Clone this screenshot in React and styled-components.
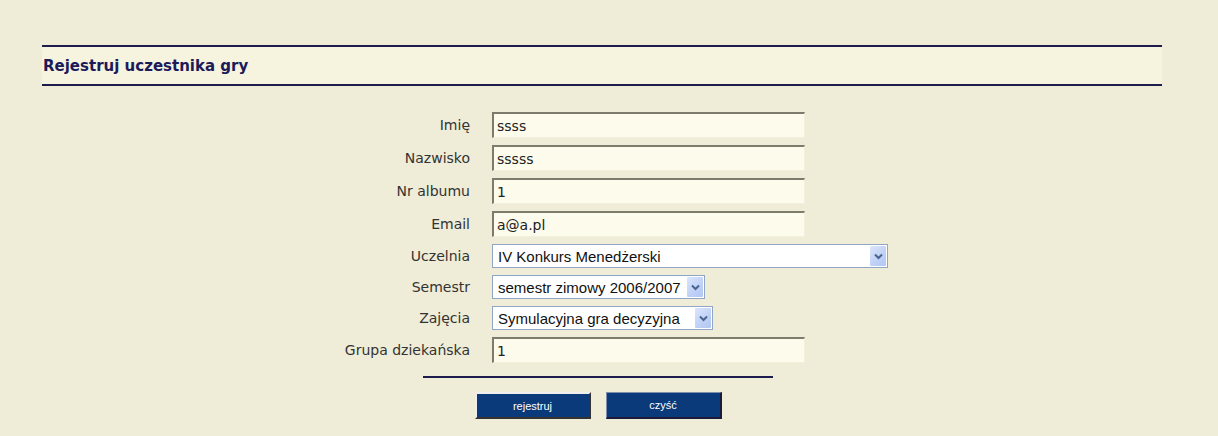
import React from "react";
import styled, { createGlobalStyle } from "styled-components";

const GlobalStyle = createGlobalStyle`
  html, body {
    margin: 0;
    padding: 0;
    background: #efecd8;
  }
  body {
    font-family: "DejaVu Sans", Verdana, sans-serif;
  }
`;

const Page = styled.div`
  width: 1218px;
  height: 436px;
  box-sizing: border-box;
  padding: 45px 0 0 42px;
  background: #efecd8;
`;

const TitleBar = styled.div`
  width: 1120px;
  height: 41px;
  box-sizing: border-box;
  border-top: 2px solid #1e1b4f;
  border-bottom: 2px solid #1e1b4f;
  background: #f6f4de;
  display: flex;
  align-items: center;
`;

const Title = styled.h2`
  margin: 0 0 0 1px;
  font-size: 15px;
  font-weight: bold;
  color: #1c1a5a;
`;

const Form = styled.form`
  margin-top: 26px;
  display: grid;
  grid-template-columns: 428px auto;
  column-gap: 22px;
  row-gap: 7px;
  align-items: center;
`;

const Label = styled.label`
  justify-self: end;
  font-size: 14px;
  color: #333333;
`;

const TextInput = styled.input`
  width: 313px;
  height: 26px;
  box-sizing: border-box;
  margin: 0;
  padding: 0 3px;
  border-style: solid;
  border-width: 2px 1px 1px 2px;
  border-color: #7d7b6c #f3f1de #f3f1de #7d7b6c;
  background: #fcfbec;
  font-family: "DejaVu Sans", Verdana, sans-serif;
  font-size: 14px;
  color: #222;
  outline: none;
`;

const SelectBox = styled.div`
  width: ${({ $width }) => $width}px;
  height: 24px;
  box-sizing: border-box;
  border: 1px solid #8fa7c4;
  background: #ffffff;
  display: flex;
  align-items: stretch;
`;

const Select = styled.select`
  flex: 1;
  min-width: 0;
  appearance: none;
  border: none;
  background: transparent;
  padding: 0 0 0 5px;
  margin: 0;
  font-family: "Liberation Sans", Arial, sans-serif;
  font-size: 15px;
  color: #111;
  outline: none;
`;

const ArrowButton = styled.span`
  width: 16px;
  margin: 1px;
  background: linear-gradient(135deg, #dce6fb 0%, #bfd0f6 60%, #b3c7f3 100%);
  border-radius: 1px;
  display: flex;
  align-items: center;
  justify-content: center;
`;

const Footer = styled.div`
  width: 350px;
  margin: 13px 0 0 381px;
  display: flex;
  flex-direction: column;
  align-items: center;
`;

const Divider = styled.div`
  width: 100%;
  height: 2px;
  background: #1e1b4f;
`;

const Buttons = styled.div`
  margin-top: 14px;
  display: flex;
  gap: 15px;
`;

const Button = styled.button`
  width: 116px;
  height: 27px;
  box-sizing: border-box;
  margin: 0;
  padding: 0;
  background: #0b3a7a;
  color: #ffffff;
  font-family: "Liberation Sans", Arial, sans-serif;
  font-size: 11px;
  border-style: solid;
  border-width: ${({ $active }) => ($active ? "2px" : "1px 2px 2px 1px")};
  border-color: ${({ $active }) =>
    $active ? "#eeeeee #333333 #333333 #eeeeee" : "#7f8fae #1a1a3a #1a1a3a #7f8fae"};
  cursor: pointer;
`;

const Chevron = () => (
  <svg width="9" height="7" viewBox="0 0 9 7">
    <path d="M1 1.5 L4.5 5 L8 1.5" fill="none" stroke="#4a6490" strokeWidth="2" />
  </svg>
);

const Dropdown = ({ width, value }) => (
  <SelectBox $width={width}>
    <Select defaultValue={value}>
      <option>{value}</option>
    </Select>
    <ArrowButton>
      <Chevron />
    </ArrowButton>
  </SelectBox>
);

export default function App() {
  return (
    <>
      <GlobalStyle />
      <Page>
        <TitleBar>
          <Title>Rejestruj uczestnika gry</Title>
        </TitleBar>
        <Form onSubmit={(e) => e.preventDefault()}>
          <Label>Imię</Label>
          <TextInput defaultValue="ssss" />
          <Label>Nazwisko</Label>
          <TextInput defaultValue="sssss" />
          <Label>Nr albumu</Label>
          <TextInput defaultValue="1" />
          <Label>Email</Label>
          <TextInput defaultValue="a@a.pl" />
          <Label>Uczelnia</Label>
          <Dropdown width={396} value="IV Konkurs Menedżerski" />
          <Label>Semestr</Label>
          <Dropdown width={213} value="semestr zimowy 2006/2007" />
          <Label>Zajęcia</Label>
          <Dropdown width={221} value="Symulacyjna gra decyzyjna" />
          <Label>Grupa dziekańska</Label>
          <TextInput defaultValue="1" />
        </Form>
        <Footer>
          <Divider />
          <Buttons>
            <Button $active>rejestruj</Button>
            <Button>czyść</Button>
          </Buttons>
        </Footer>
      </Page>
    </>
  );
}
